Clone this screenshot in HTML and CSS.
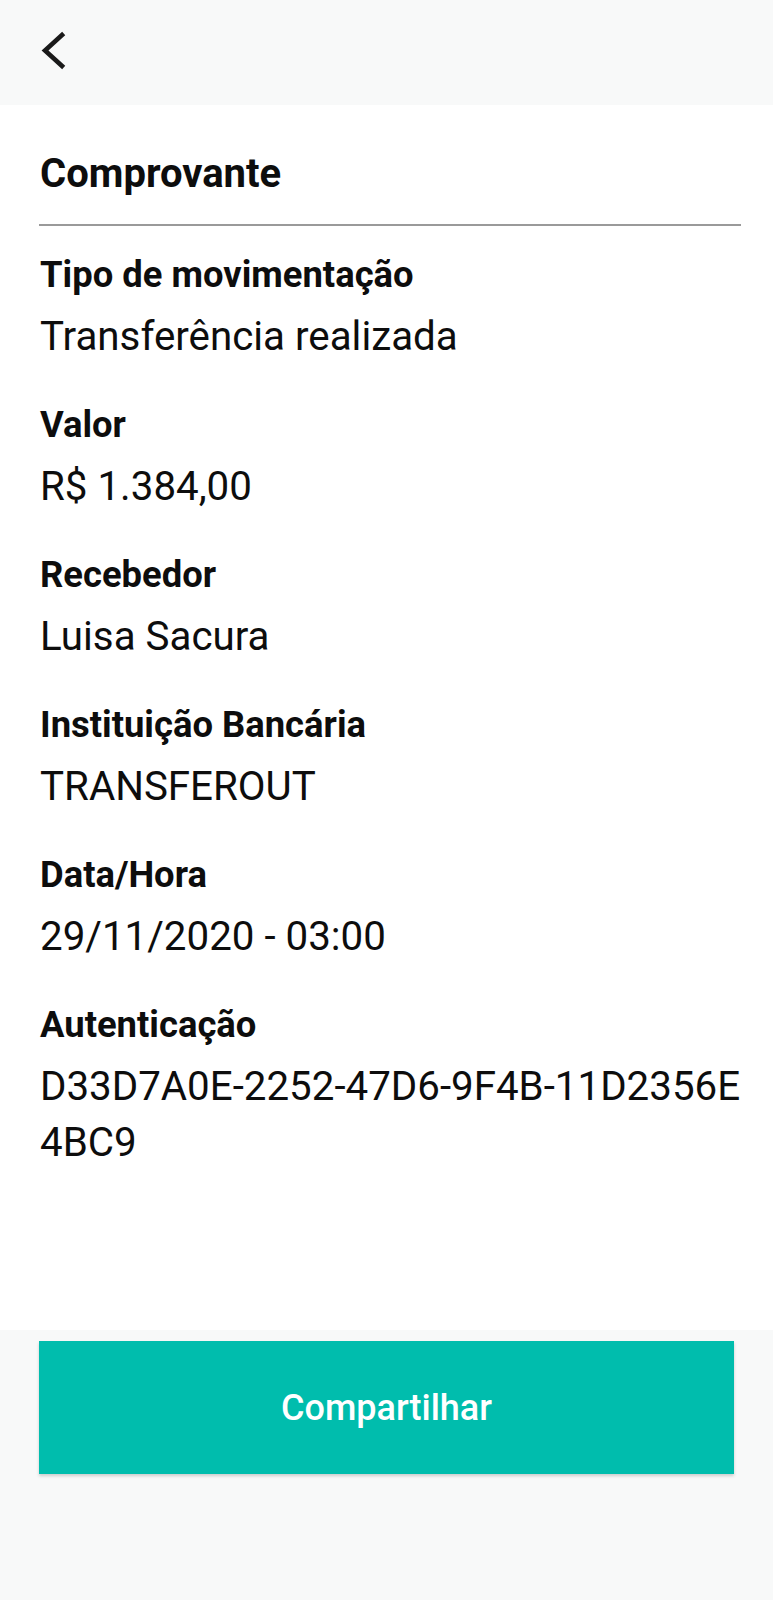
FILE: index.html
```html
<!DOCTYPE html>
<html lang="pt-BR">
<head>
<meta charset="utf-8">
<title>Comprovante</title>
<link rel="stylesheet" href="styles.css">
</head>
<body>
<div class="screen">
  <header class="topbar">
    <button class="back" aria-label="Voltar">
      <svg width="26" height="40" viewBox="0 0 26 40"><polyline points="22,4 5,19.5 22,35" fill="none" stroke="#1a1a1a" stroke-width="4.6" stroke-linecap="square" stroke-linejoin="miter"/></svg>
    </button>
  </header>
  <main class="content">
    <h1 class="title">Comprovante</h1>
    <hr class="divider">
    <div class="fields">
      <div class="field">
        <div class="label">Tipo de movimentação</div>
        <div class="value">Transferência realizada</div>
      </div>
      <div class="field">
        <div class="label">Valor</div>
        <div class="value">R$ 1.384,00</div>
      </div>
      <div class="field">
        <div class="label">Recebedor</div>
        <div class="value">Luisa Sacura</div>
      </div>
      <div class="field">
        <div class="label">Instituição Bancária</div>
        <div class="value">TRANSFEROUT</div>
      </div>
      <div class="field">
        <div class="label">Data/Hora</div>
        <div class="value">29/11/2020 - 03:00</div>
      </div>
      <div class="field">
        <div class="label">Autenticação</div>
        <div class="value value-break">D33D7A0E-2252-47D6-9F4B-11D2356E4BC9</div>
      </div>
    </div>
  </main>
  <footer class="footer">
    <button class="share">Compartilhar</button>
  </footer>
</div>
</body>
</html>
```
FILE: styles.css
```css
* { box-sizing: border-box; }
html, body { margin: 0; padding: 0; }
body {
  font-family: Roboto, "Noto Sans", sans-serif;
  color: #0d0d0d;
  background: #ffffff;
}
.screen {
  width: 773px;
  height: 1600px;
  display: flex;
  flex-direction: column;
}
.topbar {
  height: 105px;
  background: #f8f9f9;
  display: flex;
  align-items: flex-start;
  padding: 31px 0 0 40px;
}
.back {
  border: 0;
  background: transparent;
  padding: 0;
  width: 26px;
  height: 40px;
  display: block;
}
.back svg { display: block; }
.content {
  flex: 1;
  background: #fff;
  padding: 45px 32px 0 39px;
}
.title {
  margin: 0;
  font-size: 40px;
  line-height: 48px;
  font-weight: 700;
  color: #0d0d0d;
  padding-left: 1px;
}
.divider {
  margin: 26px 0 0 0;
  border: 0;
  height: 2px;
  background: #9a9a9a;
}
.fields {
  display: flex;
  flex-direction: column;
  gap: 38px;
  padding-top: 27px;
}
.field {
  display: flex;
  flex-direction: column;
  padding-left: 1px;
}
.label {
  font-size: 36.4px;
  line-height: 44px;
  font-weight: 700;
  color: #0d0d0d;
  margin-bottom: 12px;
}
.value {
  font-size: 40.3px;
  line-height: 56px;
  font-weight: 400;
  color: #0d0d0d;
}
.value-break { word-break: break-all; }
.footer {
  height: 270px;
  background: #f8f9f9;
  padding: 11px 39px 0 39px;
}
.share {
  display: flex;
  align-items: center;
  justify-content: center;
  width: 100%;
  height: 133px;
  border: 0;
  background: #00bdad;
  color: #fff;
  font-family: Roboto, "Noto Sans", sans-serif;
  font-size: 36px;
  font-weight: 500;
  box-shadow: 0 2px 3px rgba(0,0,0,0.18);
}
```
